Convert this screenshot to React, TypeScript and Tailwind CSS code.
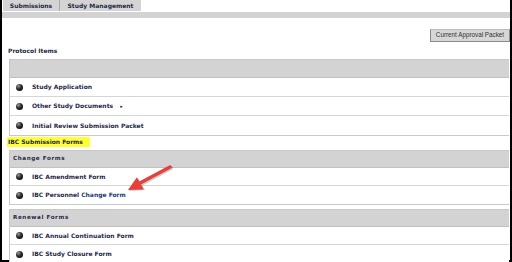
import React from 'react';

const ink = 'text-[#1f2a48]';

function Bullet() {
  return (
    <span className="inline-block w-[7px] h-[7px] rounded-full shrink-0 bg-[radial-gradient(circle_at_35%_30%,#9a9a9a_0%,#2a2a2a_45%,#000_100%)]" />
  );
}

function Row({ children, last, tight }: { children: React.ReactNode; last?: boolean; tight?: boolean }) {
  return (
    <div
      className={`${tight ? 'h-[18px]' : 'h-[19px]'} flex items-center pl-[6px] gap-[9px] bg-white ${
        last ? '' : 'border-b border-[#d6d6d6]'
      }`}
    >
      <Bullet />
      <span className={`font-bold ${ink}`}>{children}</span>
    </div>
  );
}

function Header({ label, tight }: { label?: string; tight?: boolean }) {
  return (
    <div
      className={`${tight ? 'h-[17px]' : 'h-[18px]'} flex items-center pl-[3px] bg-[#d3d3d3] border-b border-[#c0c0c0] font-bold ${ink} text-[5.6px] tracking-[0.6px]`}
    >
      {label}
    </div>
  );
}

export default function App() {
  return (
    <div className="w-[512px] h-[262px] overflow-hidden bg-white relative font-['DejaVu_Sans',sans-serif] text-[6px] leading-none">
      <div className="h-full border-l-2 border-r-2 border-b-2 border-black flex flex-col">
        {/* tabs */}
        <div className="h-[11px] shrink-0 flex">
          <div className={`w-[57px] ml-[1px] bg-[#d4d4d4] flex items-center justify-center font-bold ${ink} border-r border-[#aaa]`}>
            Submissions
          </div>
          <div className={`w-[81px] bg-[#d4d4d4] flex items-center justify-center font-bold ${ink}`}>
            Study Management
          </div>
        </div>
        <div className="h-[6px] shrink-0 mt-[1px] bg-[#d3d3d3]" />

        {/* action button */}
        <div className="flex shrink-0 justify-end mt-[11px]">
          <button className="h-[13px] w-[80px] bg-[#d6d6d6] border border-[#8a8a8a] border-t-[#bcbcbc] font-['Liberation_Sans',sans-serif] text-[6.3px] text-[#333] flex items-center justify-center">
            Current Approval Packet
          </button>
        </div>

        <div className={`shrink-0 mt-[4px] ml-[6px] h-[10px] flex items-center font-bold ${ink}`}>Protocol Items</div>

        <div className="shrink-0 ml-[7px] mr-[1px] mt-[3px] border border-[#c8c8c8] border-r-0">
          <Header />
          <Row>Study Application</Row>
          <Row>
            Other Study Documents <span className="ml-[5px] text-[5px]">▸</span>
          </Row>
          <Row last>Initial Review Submission Packet</Row>
        </div>

        <div className="shrink-0 mt-[1px] ml-[5px] flex">
          <span className={`bg-[#ffff33] pl-[1px] pr-[7px] h-[10px] flex items-center font-bold ${ink}`}>IBC Submission Forms</span>
        </div>

        <div className="shrink-0 ml-[7px] mr-[1px] mt-[3px] border border-[#c8c8c8] border-r-0">
          <Header tight label="Change Forms" />
          <Row tight>IBC Amendment Form</Row>
          <Row tight last>
            IBC Personnel <span className="text-[#1d3a78]">Change Form</span>
          </Row>
        </div>

        <div className="shrink-0 ml-[7px] mr-[1px] mt-[4px] border border-[#c8c8c8] border-r-0">
          <Header tight label="Renewal Forms" />
          <Row tight>IBC Annual Continuation Form</Row>
          <Row tight last>IBC Study Closure Form</Row>
        </div>
      </div>

      {/* red callout arrow */}
      <svg className="absolute left-[120px] top-[160px]" width="56" height="36" viewBox="0 0 56 36">
        <g transform="translate(1 1)" opacity="0.2">
          <line x1="50" y1="7" x2="20" y2="23" stroke="#000" strokeWidth="4" strokeLinecap="round" />
          <polygon points="8,30 17,17 24,29" fill="#000" />
        </g>
        <line x1="50" y1="7" x2="20" y2="23" stroke="#e5403a" strokeWidth="3.5" strokeLinecap="round" />
        <polygon points="8,30 16.9,17.2 23.7,29.4" fill="#e5403a" />
      </svg>
    </div>
  );
}
